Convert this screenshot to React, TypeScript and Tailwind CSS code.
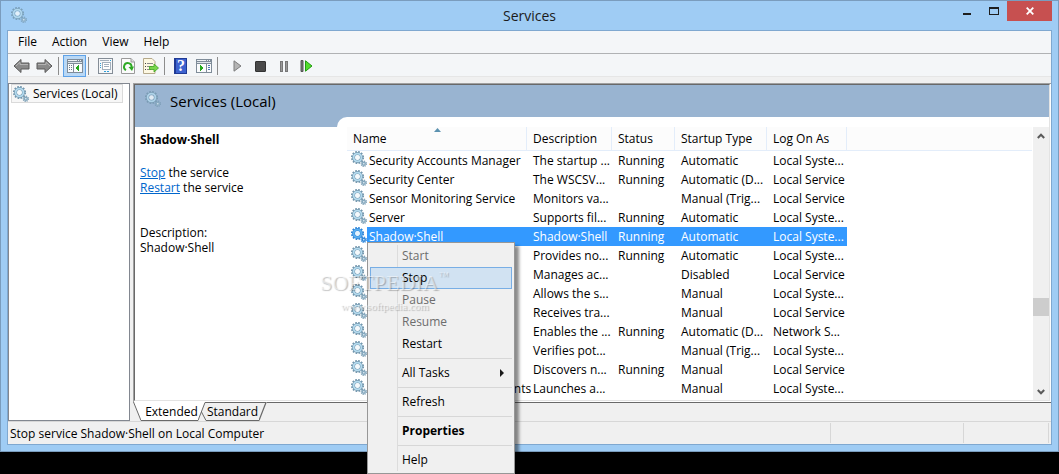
import { ReactNode } from "react";
import clsx from "clsx";

type Service = {
  name: string;
  description: string;
  status?: string;
  startup: string;
  logOn: string;
  selected?: boolean;
};

const services: Service[] = [
  { name: "Security Accounts Manager", description: "The startup ...", status: "Running", startup: "Automatic", logOn: "Local Syste..." },
  { name: "Security Center", description: "The WSCSV...", status: "Running", startup: "Automatic (D...", logOn: "Local Service" },
  { name: "Sensor Monitoring Service", description: "Monitors va...", startup: "Manual (Trig...", logOn: "Local Service" },
  { name: "Server", description: "Supports fil...", status: "Running", startup: "Automatic", logOn: "Local Syste..." },
  { name: "Shadow·Shell", description: "Shadow·Shell", status: "Running", startup: "Automatic", logOn: "Local Syste...", selected: true },
  { name: "Shell Hardware Detection", description: "Provides no...", status: "Running", startup: "Automatic", logOn: "Local Syste..." },
  { name: "Smart Card", description: "Manages ac...", startup: "Disabled", logOn: "Local Service" },
  { name: "Smart Card Policy", description: "Allows the s...", startup: "Manual", logOn: "Local Syste..." },
  { name: "SNMP Trap", description: "Receives tra...", startup: "Manual", logOn: "Local Service" },
  { name: "Software Protection", description: "Enables the ...", status: "Running", startup: "Automatic (D...", logOn: "Network S..." },
  { name: "Spot Verifier", description: "Verifies pot...", startup: "Manual (Trig...", logOn: "Local Syste..." },
  { name: "SSDP Discovery", description: "Discovers n...", status: "Running", startup: "Manual", logOn: "Local Service" },
  { name: "Still Image Acquisition Events", description: "Launches a...", startup: "Manual", logOn: "Local Syste..." },
];

const Gears = ({ active, faded }: { active?: boolean; faded?: boolean }) => {
  const edge = active ? "#2f86d8" : "#7397ae";
  const body = active ? "#58aef0" : "#b3daee";
  return (
    <svg viewBox="0 0 16 16" className={clsx("size-4 shrink-0", faded && "opacity-80")} fill="none">
      <circle cx="6.5" cy="6.5" r="5.7" stroke={edge} strokeWidth="1.8" strokeDasharray="1.7 1.28" />
      <circle cx="6.5" cy="6.5" r="3.9" stroke={edge} strokeWidth="3" />
      <circle cx="6.5" cy="6.5" r="3.9" stroke={body} strokeWidth="1.8" />
      <circle cx="6.5" cy="6.5" r="2.3" fill={active ? "#e4f2fd" : "#f4f9fc"} />
      <circle cx="12.8" cy="12.8" r="2.6" stroke={edge} strokeWidth="1.2" strokeDasharray="1.1 0.94" />
      <circle cx="12.8" cy="12.8" r="1.5" stroke={active ? "#2f86d8" : "#86a9bf"} strokeWidth="1.4" fill="#e8f2f8" />
    </svg>
  );
};

const Arrow = ({ flip }: { flip?: boolean }) => (
  <svg viewBox="0 0 17 16" className={clsx("h-4 w-[17px]", flip && "-scale-x-100")}>
    <path d="M1 8 8 1.500V5h8v6H8v3.500z" fill="#8a8a8a" stroke="#5a5a5a" />
    <path d="M3 8 7 4.200V6.500h8" fill="none" stroke="#b4b4b4" />
  </svg>
);

const Panes = ({ tree }: { tree?: boolean }) => (
  <svg viewBox="0 0 16 14" className="h-[14px] w-4" shapeRendering="crispEdges">
    <path d="M0 0h16v14H0z" fill="#7f8c99" />
    <path d="M1 3h14v1H1z" fill="#dfe5ea" />
    <path d="M1 1h9v1H1zM11 1h1v1h-1zM13 1h1v1h-1z" fill="#eef2f5" />
    {tree ? (
      <>
        <path d="M1 5h5v8H1zM7 5h8v8H7z" fill="#fafbfc" />
        <path d="M2 6h1v1H2zM2 8h1v1H2zM2 10h1v1H2zM4 6h1v1H4zM4 8h1v1H4zM4 10h1v1H4z" fill="#6f7d8c" />
        <path d="M12 6v6L8.500 9z" fill="#25a81c" />
      </>
    ) : (
      <>
        <path d="M1 5h9v8H1zM11 5h4v8h-4z" fill="#fafbfc" />
        <path d="M12 6h2v1h-2zM12 8h2v1h-2zM12 10h2v1h-2z" fill="#4d77b3" />
        <path d="M4 6v6l3.500-3z" fill="#25a81c" />
      </>
    )}
  </svg>
);

const PropertiesIcon = () => (
  <svg viewBox="0 0 16 16" className="size-4" shapeRendering="crispEdges">
    <path d="M1 0h15v16H1z" fill="#848d97" />
    <path d="M2 1h13v14H2z" fill="#f5f7f9" />
    <path d="M3 2h9v1H3zM5 4h9v8H5z" fill="#a3b0bd" />
    <path d="M6 5h7v6H6z" fill="#fff" />
    <path d="M7 6h5v1H7zM7 8h5v1H7z" fill="#a3b0bd" />
    <path d="M3 5h1v1H3zM3 7h1v1H3zM3 9h1v1H3zM7 13h2v1H7zM10 13h2v1h-2zM13 2h1v1h-1z" fill="#2e9fd8" />
  </svg>
);

const RefreshIcon = () => (
  <svg viewBox="0 0 14 16" className="h-4 w-[14px]">
    <path d="M.5.5h9.500l3.500 3.500v11.500H.5z" fill="#fbfbfb" stroke="#9a9a9a" />
    <path d="M10 .5V4h3.500" fill="#dcdcdc" stroke="#9a9a9a" />
    <path d="M5 12.200A3.800 3.800 0 1 1 10.600 9" fill="none" stroke="#2faa25" strokeWidth="1.900" />
    <path d="m7.500 9 5.500-.5-2 4.500z" fill="#2faa25" />
  </svg>
);

const ExportIcon = () => (
  <svg viewBox="0 0 17 16" className="h-4 w-[17px]">
    <path d="M1.500.5H10l3 3v12H1.500z" fill="#fdf8e2" stroke="#b5a98a" />
    <path d="M3 5.500h1M3 8.500h1M3 11.500h1" stroke="#444" />
    <path d="M5 5.500h6M5 8.500h5M5 11.500h4" stroke="#8a8a8a" />
    <path d="M7.500 8.500H12V6l4.500 4-4.500 4v-2.500H7.500z" fill="#79d64c" stroke="#3fa41f" strokeWidth=".8" />
  </svg>
);

const HelpIcon = () => (
  <span className="flex h-4 w-[13px] items-center justify-center border border-l-2 border-[#1f3a94] bg-[#3d62cf] font-['Liberation_Serif',serif] text-base leading-4 font-bold text-white">
    ?
  </span>
);

const Play = () => (
  <svg viewBox="0 0 9 12" className="h-3 w-[9px]">
    <path d="M1 .8 8 6l-7 5.200z" fill="#b4b4b4" stroke="#7d7d7d" />
  </svg>
);

const Stop = () => <span className="size-[11px] rounded-[1px] border border-[#333] bg-[#4a4a4a]" />;

const Pause = () => (
  <span className="flex gap-[2px]">
    <span className="h-[11px] w-[3px] border border-[#777] bg-[#999]" />
    <span className="h-[11px] w-[3px] border border-[#777] bg-[#999]" />
  </span>
);

const Restart = () => (
  <svg viewBox="0 0 13 12" className="h-3 w-[13px]">
    <path d="M1 .5h2v11H1z" fill="#777" stroke="#555" />
    <path d="M5.500.8 12 6l-6.500 5.200z" fill="#52dc2c" stroke="#219a12" />
  </svg>
);

const ToolButton = ({ label, pressed, children }: { label: string; pressed?: boolean; children: ReactNode }) => (
  <button
    aria-label={label}
    aria-pressed={pressed}
    className={clsx(
      "flex h-[22px] w-[23px] shrink-0 items-center justify-center",
      pressed && "border border-[#5ea2e8] bg-[#b9d8f5]"
    )}
  >
    {children}
  </button>
);

const ToolSeparator = () => <span className="mr-1 ml-[2px] h-[18px] w-px bg-[#8d8d8d]" />;

const TitleBar = () => (
  <header className="flex h-[29px] items-start">
    <div className="flex-1 pt-[6px]">
      <div className="pl-1">
        <Gears faded />
      </div>
    </div>
    <h1 className="text-sm leading-[29px] text-[#1b1b1b]">Services</h1>
    <div className="flex flex-1 justify-end">
      <button aria-label="Minimize" className="flex h-[19px] w-[27px] justify-center pt-3">
        <span className="h-[2px] w-2 bg-[#1e1e1e]" />
      </button>
      <button aria-label="Maximize" className="flex h-[19px] w-[27px] justify-center pt-[6px]">
        <span className="h-2 w-[10px] border border-t-2 border-[#1e1e1e]" />
      </button>
      <button aria-label="Close" className="flex h-5 w-[45px] items-center justify-center bg-[#c75050]">
        <svg viewBox="0 0 8 8" className="size-2">
          <path d="m.7.700 6.600 6.600M7.300.7.700 7.300" stroke="#fff" strokeWidth="1.800" />
        </svg>
      </button>
    </div>
  </header>
);

const MenuBar = () => (
  <nav className="flex h-[23px] items-center gap-[15px] border-b border-[#b0b2b4] bg-[#f4f6f8] pl-[10px]">
    {["File", "Action", "View", "Help"].map((item) => (
      <button key={item}>{item}</button>
    ))}
  </nav>
);

const ToolBar = () => (
  <div className="flex h-[23px] items-start border-b border-[#e6e6e6] bg-[#f4f6f8] pt-px pl-[2px]">
    <div className="flex items-center">
      <ToolButton label="Back"><Arrow /></ToolButton>
      <ToolButton label="Forward"><Arrow flip /></ToolButton>
      <ToolSeparator />
      <ToolButton label="Show console tree" pressed><Panes tree /></ToolButton>
      <ToolSeparator />
      <ToolButton label="Properties"><PropertiesIcon /></ToolButton>
      <ToolButton label="Refresh"><RefreshIcon /></ToolButton>
      <ToolButton label="Export list"><ExportIcon /></ToolButton>
      <ToolSeparator />
      <ToolButton label="Help topics"><HelpIcon /></ToolButton>
      <ToolButton label="Show action pane"><Panes /></ToolButton>
      <ToolSeparator />
      <div className="flex pl-1">
        <ToolButton label="Start service"><Play /></ToolButton>
        <ToolButton label="Stop service"><Stop /></ToolButton>
        <ToolButton label="Pause service"><Pause /></ToolButton>
        <ToolButton label="Restart service"><Restart /></ToolButton>
      </div>
    </div>
  </div>
);

const DetailPane = () => (
  <section className="w-[202px] shrink-0 border-t-[10px] border-[#99b4d1] pt-[5px] pl-[5px] leading-[15px]">
    <h3 className="font-bold">Shadow·Shell</h3>
    <p className="mt-[18px]">
      <a href="#stop" className="text-[#0066cc] underline">Stop</a> the service
    </p>
    <p>
      <a href="#restart" className="text-[#0066cc] underline">Restart</a> the service
    </p>
    <p className="mt-[30px]">Description:</p>
    <p>Shadow·Shell</p>
  </section>
);

const headCell = "border-r border-b border-[#e3edfa] p-0 pl-[6px] text-left font-normal";

const ServiceTable = () => (
  <table className="w-full table-fixed border-separate border-spacing-0">
    <colgroup>
      <col className="w-[180px]" />
      <col className="w-[85px]" />
      <col className="w-[63px]" />
      <col className="w-[92px]" />
      <col className="w-[80px]" />
      <col />
    </colgroup>
    <thead>
      <tr className="h-6 bg-[#fcfcfc]">
        <th className={clsx(headCell, "relative")}>
          Name
          <svg viewBox="0 0 7 4" className="absolute top-px left-1/2 h-1 w-[7px] -translate-x-[3px]">
            <path d="M3.500 0 7 4H0z" fill="#5c92b0" />
          </svg>
        </th>
        <th className={headCell}>Description</th>
        <th className={headCell}>Status</th>
        <th className={headCell}>Startup Type</th>
        <th className={headCell}>Log On As</th>
        <th className="border-b border-[#e3edfa] p-0" />
      </tr>
    </thead>
    <tbody>
      {services.map((service) => {
        const cell = clsx(
          "h-[19px] p-0 pl-[6px] leading-[19px] whitespace-nowrap",
          service.selected && "bg-[#3399ff] text-white"
        );
        return (
          <tr key={service.name}>
            <td className="h-[19px] p-0">
              <div className="flex h-[19px] pl-1">
                <Gears active={service.selected} />
                <span
                  className={clsx(
                    "flex-1 pl-[2px] leading-[19px] whitespace-nowrap",
                    service.selected && "bg-[#3399ff] text-white"
                  )}
                >
                  {service.name}
                </span>
              </div>
            </td>
            <td className={cell}>{service.description}</td>
            <td className={cell}>{service.status}</td>
            <td className={cell}>{service.startup}</td>
            <td className={cell}>{service.logOn}</td>
            <td className="p-0" />
          </tr>
        );
      })}
    </tbody>
  </table>
);

const Chevron = ({ down }: { down?: boolean }) => (
  <svg viewBox="0 0 8 6" className={clsx("h-[6px] w-2", down && "rotate-180")}>
    <path d="M.8 5 4 1.700 7.200 5" fill="none" stroke="#5a5a5a" strokeWidth="2" />
  </svg>
);

const ScrollBar = () => (
  <div className="flex w-4 shrink-0 flex-col bg-[#f0f0f0]">
    <button aria-label="Scroll up" className="flex h-[17px] items-center justify-center"><Chevron /></button>
    <div className="flex flex-1 flex-col justify-end pb-[67px]">
      <div className="h-[18px] bg-[#cdcdcd]" />
    </div>
    <button aria-label="Scroll down" className="flex h-[17px] items-center justify-center"><Chevron down /></button>
  </div>
);

const ViewTabs = () => (
  <div className="flex h-[19px] leading-[19px]">
    <svg viewBox="0 0 8 19" className="h-[19px] w-2">
      <path d="M0 0h8v19z" fill="#fff" />
      <path d="M.5 0 8 18.500" stroke="#696969" />
    </svg>
    <button className="w-[57px] border-b border-[#696969] bg-white pl-1">Extended</button>
    <svg viewBox="0 0 8 19" className="h-[19px] w-2">
      <path d="M0 0h7L0 19z" fill="#fff" />
      <path d="M0 18.500 7 .5h1M3.500 10 8 18.500" fill="none" stroke="#696969" />
    </svg>
    <button className="w-[53px] border-t border-b border-[#696969] leading-[18px]">Standard</button>
    <svg viewBox="0 0 8 19" className="h-[19px] w-2">
      <path d="M0 18.500 7 .5H0" fill="none" stroke="#696969" strokeWidth="1.200" />
    </svg>
    <div className="flex-1 border-t border-[#696969]" />
  </div>
);

const StatusBar = () => (
  <footer className="flex h-[23px] border-t border-[#d7d7d7] pt-px pr-[2px] pl-[2px] leading-[22px]">
    <span className="h-5 flex-1 border-r border-[#d7d7d7]">Stop service Shadow·Shell on Local Computer</span>
    <span className="h-5 w-[133px] border-r border-[#d7d7d7]" />
    <span className="h-5 w-[85px] border-r border-[#d7d7d7]" />
  </footer>
);

const MenuItem = ({ children, disabled, hover, bold, submenu }: { children: ReactNode; disabled?: boolean; hover?: boolean; bold?: boolean; submenu?: boolean }) => (
  <button
    role="menuitem"
    disabled={disabled}
    className={clsx(
      "relative flex h-[22px] w-full items-center justify-between border pr-[7px] pl-[31px]",
      hover ? "border-[#78aee5] bg-[#d1e2f2]" : "border-transparent",
      disabled && "text-[#6d6d6d]",
      bold && "font-bold"
    )}
  >
    {children}
    {submenu && (
      <svg viewBox="0 0 4 8" className="h-2 w-1">
        <path d="M0 0v8l4-4z" fill="#1a1a1a" />
      </svg>
    )}
  </button>
);

const MenuSeparator = () => <div className="my-[3px] ml-7 h-px bg-[#d7d7d7]" />;

const ContextMenu = () => (
  <div
    role="menu"
    className="absolute top-[242px] left-[367px] w-[148px] border border-[#979797] bg-[#f0f0f0] p-[2px] shadow-[4px_4px_3px_rgba(0,0,0,0.45)]"
  >
    <div className="absolute top-[2px] bottom-[2px] left-[29px] w-px bg-[#dcdcdc]" />
    <MenuItem disabled>Start</MenuItem>
    <MenuItem hover>Stop</MenuItem>
    <MenuItem disabled>Pause</MenuItem>
    <MenuItem disabled>Resume</MenuItem>
    <MenuItem>Restart</MenuItem>
    <MenuSeparator />
    <MenuItem submenu>All Tasks</MenuItem>
    <MenuSeparator />
    <MenuItem>Refresh</MenuItem>
    <MenuSeparator />
    <MenuItem bold>Properties</MenuItem>
    <MenuSeparator />
    <MenuItem>Help</MenuItem>
  </div>
);

const Watermark = () => (
  <div className="pointer-events-none absolute top-[270px] left-[320px] font-['Liberation_Serif',serif] text-white/50 [text-shadow:1px_1px_1px_rgba(0,0,0,0.25)]">
    <div className="flex items-start">
      <span className="text-[22px] leading-[26px]">SOFTPEDIA</span>
      <span className="text-[10px] leading-3">™</span>
    </div>
    <div className="mt-1 pl-[21px] text-[11px] leading-3">www.softpedia.com</div>
  </div>
);

const App = () => {
  return (
    <div className="relative min-h-screen overflow-hidden bg-black font-['Open_Sans','Noto_Sans',sans-serif] text-xs text-black">
      <div className="border border-[#7a9cbd] bg-[#9fccf4] px-[6px] pb-[6px]">
        <TitleBar />
        <div className="border border-[#7fa8d0] bg-[#f0f0f0]">
          <MenuBar />
          <ToolBar />
          <main className="flex gap-[3px] pt-[6px]">
            <aside className="w-[122px] shrink-0 border border-[#828790] bg-white pl-[2px]">
              <button className="flex h-[19px] items-center gap-1 border border-[#dadada] bg-[#f7f7f7] pr-1 pl-px whitespace-nowrap">
                <Gears />
                Services (Local)
              </button>
            </aside>
            <div className="flex min-w-0 flex-1 flex-col">
              <div className="border-t border-l border-[#a0a0a0] bg-white pr-px">
                <div className="border border-t-[#696969] border-r-[#e3e3e3] border-b-[#e3e3e3] border-l-[#696969]">
                  <div className="flex h-8 items-center gap-[9px] bg-[#99b4d1] pl-[10px]">
                    <div className="pb-1">
                      <Gears faded />
                    </div>
                    <h2 className="text-[15px]">Services (Local)</h2>
                  </div>
                  <div className="flex">
                    <DetailPane />
                    <div className="min-w-0 flex-1 bg-[#99b4d1]">
                      <div className="h-[10px] rounded-tl-[10px] bg-white" />
                      <div className="flex bg-white pl-[10px]">
                        <div className="min-w-0 flex-1 pr-px pb-[2px]">
                          <ServiceTable />
                        </div>
                        <ScrollBar />
                      </div>
                    </div>
                  </div>
                </div>
                <div className="h-px" />
              </div>
              <ViewTabs />
            </div>
          </main>
          <StatusBar />
        </div>
      </div>
      <ContextMenu />
      <Watermark />
    </div>
  );
};

export default App;
